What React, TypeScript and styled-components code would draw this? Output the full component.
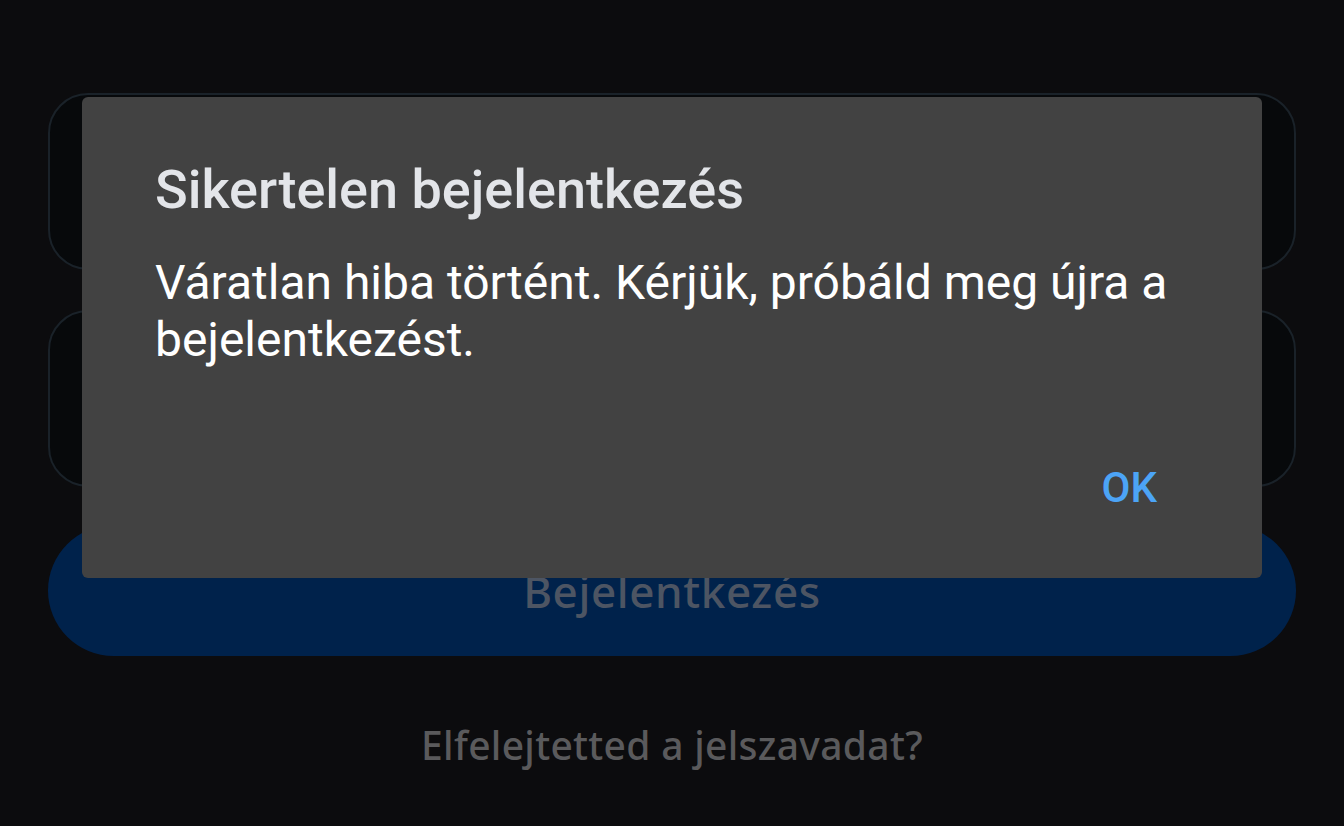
import { createGlobalStyle } from "styled-components";
import styled from "styled-components";

const GlobalStyle = createGlobalStyle`
    html, body {
        margin: 0;
        padding: 0;
        background: #0c0c0e;
        height: 100%;
    }

    body {
        font-family: Roboto, "Noto Sans", sans-serif;
        overflow: hidden;
    }
`;

const App = () => {
    return (
        <>
            <GlobalStyle />
            <Screen>
                <LoginForm>
                    <Field />
                    <Field />
                    <SubmitButton>Bejelentkezés</SubmitButton>
                    <ForgotLink>Elfelejtetted a jelszavadat?</ForgotLink>
                </LoginForm>
            </Screen>
            <Scrim>
                <Dialog role="alertdialog">
                    <DialogTitle>Sikertelen bejelentkezés</DialogTitle>
                    <DialogMessage>
                        Váratlan hiba történt. Kérjük, próbáld meg újra a bejelentkezést.
                    </DialogMessage>
                    <DialogActions>
                        <ActionButton>OK</ActionButton>
                    </DialogActions>
                </Dialog>
            </Scrim>
        </>
    );
};

const Screen = styled.div`
    width: 100vw;
    height: 100vh;
    background: #0c0c0e;
`;

const LoginForm = styled.div`
    display: flex;
    flex-direction: column;
    padding: 93px 48px 0;
`;

const Field = styled.div`
    height: 177px;
    box-sizing: border-box;
    border: 2px solid #1a2229;
    border-radius: 40px;
    background: #07090b;
    margin-bottom: 40px;

    &:nth-of-type(2) {
        margin-bottom: 38px;
    }
`;

const SubmitButton = styled.div`
    height: 131px;
    border-radius: 66px;
    background: #00224b;
    display: flex;
    align-items: center;
    justify-content: center;

    font-family: "Noto Sans", sans-serif;
    font-weight: 550;
    font-size: 44px;
    letter-spacing: 0.6px;
    color: #4d5563;
`;

const ForgotLink = styled.div`
    margin-top: 62px;
    text-align: center;
    font-family: "Noto Sans", sans-serif;
    font-weight: 550;
    font-size: 39px;
    line-height: 54px;
    letter-spacing: 0.3px;
    color: #5a5a5c;
`;

const Scrim = styled.div`
    position: fixed;
    inset: 0;
`;

const Dialog = styled.div`
    position: absolute;
    left: 82px;
    top: 97px;
    width: 1180px;
    height: 481px;
    box-sizing: border-box;
    padding: 61px 73px 0;
    border-radius: 6px;
    background: #424242;
    display: flex;
    flex-direction: column;
`;

const DialogTitle = styled.div`
    font-weight: 500;
    font-size: 54px;
    line-height: 64px;
    color: #e3e5e9;
`;

const DialogMessage = styled.div`
    margin-top: 32px;
    font-weight: 400;
    font-size: 48px;
    line-height: 57px;
    color: #ffffff;
`;

const DialogActions = styled.div`
    margin-top: auto;
    display: flex;
    justify-content: flex-end;
    padding: 0 32px 65px 0;
`;

const ActionButton = styled.div`
    font-weight: 500;
    font-size: 42px;
    line-height: 50px;
    color: #4ca4f6;
`;

export default App;
